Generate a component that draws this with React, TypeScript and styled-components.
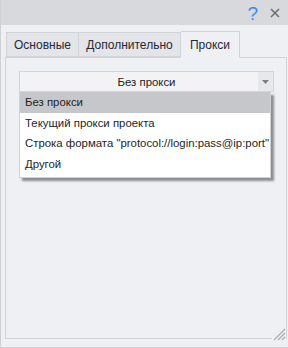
import React from 'react';
import styled, { createGlobalStyle } from 'styled-components';

const GlobalStyle = createGlobalStyle`
  html, body {
    margin: 0;
    padding: 0;
    background: #eff0f4;
  }
  body {
    font-family: "Liberation Sans", Arial, sans-serif;
    font-size: 11.4px;
    color: #222;
  }
`;

const tabs = [
  { label: 'Основные', width: 73 },
  { label: 'Дополнительно', width: 102 },
  { label: 'Прокси', width: 59, active: true },
];

const options = [
  'Без прокси',
  'Текущий прокси проекта',
  'Строка формата "protocol://login:pass@ip:port"',
  'Другой',
];

const App: React.FC = () => {
  return (
    <>
      <GlobalStyle />
      <Window>
        <TitleBar>
          <HelpIcon>?</HelpIcon>
          <CloseButton>
            <svg width="10" height="10" viewBox="0 0 10 10">
              <path d="M1 1 L9 9 M9 1 L1 9" stroke="#6b6e75" strokeWidth="1.6" />
            </svg>
          </CloseButton>
        </TitleBar>
        <Body>
          <TabRow>
            {tabs.map((t) => (
              <Tab key={t.label} $active={!!t.active} $width={t.width}>
                {t.label}
              </Tab>
            ))}
          </TabRow>
          <Panel>
            <ComboWrap>
              <Combo>
                <ComboValue>Без прокси</ComboValue>
                <ComboArrow>
                  <svg width="7" height="4" viewBox="0 0 7 4">
                    <path d="M0 0 H7 L3.5 4 Z" fill="#7c7f86" />
                  </svg>
                </ComboArrow>
              </Combo>
              <DropList>
                {options.map((o, i) => (
                  <Option key={o} $selected={i === 0}>
                    {o}
                  </Option>
                ))}
              </DropList>
            </ComboWrap>
          </Panel>
        </Body>
        <Grip>
          <svg width="14" height="14" viewBox="0 0 14 14">
            <path
              d="M13 2 L2 13 M13 6 L6 13 M13 10 L10 13"
              stroke="#a9adb4"
              strokeWidth="1.3"
            />
          </svg>
        </Grip>
      </Window>
    </>
  );
};

export default App;

const Window = styled.div`
  position: relative;
  box-sizing: border-box;
  width: 288px;
  height: 348px;
  border-left: 1px solid #cdd0d5;
  border-bottom: 1px solid #cdd0d5;
  background: #eff0f4;
  display: flex;
  flex-direction: column;
  overflow: hidden;
`;

const TitleBar = styled.div`
  height: 25px;
  flex: none;
  background: #d7d9dd;
  display: flex;
  align-items: center;
  justify-content: flex-end;
  padding-right: 8px;
  gap: 12px;
`;

const HelpIcon = styled.span`
  font-family: "Liberation Sans", Arial, sans-serif;
  font-size: 19px;
  line-height: 1;
  color: #3d8ae6;
  margin-top: 2px;
`;

const CloseButton = styled.span`
  display: flex;
  width: 10px;
  height: 10px;
  margin-top: 1px;
`;

const Body = styled.div`
  flex: 1;
  display: flex;
  flex-direction: column;
  padding: 6px 1px 8px 4px;
  min-height: 0;
`;

const TabRow = styled.div`
  display: flex;
  align-items: flex-end;
  height: 27px;
  flex: none;
  position: relative;
  z-index: 1;
  margin-bottom: -1px;
  padding-left: 1px;
`;

const Tab = styled.div<{ $active: boolean; $width: number }>`
  box-sizing: border-box;
  width: ${(p) => p.$width}px;
  height: ${(p) => (p.$active ? 27 : 25)}px;
  margin-bottom: ${(p) => (p.$active ? 0 : 1)}px;
  display: flex;
  align-items: center;
  justify-content: center;
  padding-top: ${(p) => (p.$active ? 0 : 1)}px;
  background: ${(p) => (p.$active ? '#eff0f4' : '#e3e5e9')};
  border: 1px solid #d0d3d8;
  border-bottom: ${(p) => (p.$active ? '1px solid #eff0f4' : '1px solid #d0d3d8')};
  color: #25283a;
  font-size: 12px;
  white-space: nowrap;
  & + & {
    border-left: none;
  }
`;

const Panel = styled.div`
  flex: 1;
  box-sizing: border-box;
  border: 1px solid #d0d3d8;
  padding: 13px 12px 0 13px;
`;

const ComboWrap = styled.div`
  position: relative;
  width: 255px;
`;

const Combo = styled.div`
  box-sizing: border-box;
  height: 21px;
  display: flex;
  border: 1px solid #d3d5d9;
  background: #f3f3f5;
`;

const ComboValue = styled.div`
  flex: 1;
  display: flex;
  align-items: center;
  justify-content: center;
  padding-left: 15px;
  color: #222;
`;

const ComboArrow = styled.div`
  width: 15px;
  display: flex;
  align-items: center;
  justify-content: center;
  background: #e7e8eb;
`;

const DropList = styled.div`
  position: absolute;
  top: 21px;
  left: 0;
  width: 252px;
  box-sizing: border-box;
  background: #ffffff;
  border: 1px solid #cfd1d5;
  border-top: none;
  box-shadow: 3px 3px 2px rgba(60, 62, 66, 0.55);
  padding-bottom: 3px;
`;

const Option = styled.div<{ $selected: boolean }>`
  height: 20.5px;
  display: flex;
  align-items: center;
  padding-left: 5px;
  background: ${(p) => (p.$selected ? '#c6c7cb' : 'transparent')};
  color: #1e1e1e;
  white-space: nowrap;
`;

const Grip = styled.div`
  position: absolute;
  right: 2px;
  bottom: 6px;
  width: 14px;
  height: 14px;
  background: #eff0f4;
  display: flex;
`;
